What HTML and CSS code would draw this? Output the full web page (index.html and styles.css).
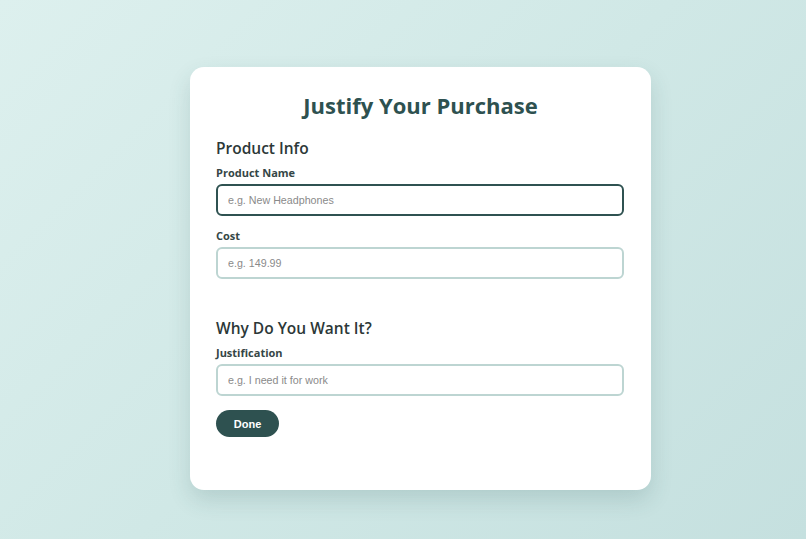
FILE: index.html
```html
<!DOCTYPE html>
<html lang="en">
<head>
<meta charset="utf-8">
<title>Justify Your Purchase</title>
<link rel="stylesheet" href="styles.css">
</head>
<body>
<main class="page">
  <form class="card">
    <h1 class="title">Justify Your Purchase</h1>
    <section class="section">
      <h2 class="section-title">Product Info</h2>
      <div class="field">
        <label class="label" for="name">Product Name</label>
        <input class="input input-focus" id="name" type="text" placeholder="e.g. New Headphones">
      </div>
      <div class="field">
        <label class="label" for="cost">Cost</label>
        <input class="input" id="cost" type="text" placeholder="e.g. 149.99">
      </div>
    </section>
    <section class="section section-second">
      <h2 class="section-title">Why Do You Want It?</h2>
      <div class="field">
        <label class="label" for="why">Justification</label>
        <input class="input" id="why" type="text" placeholder="e.g. I need it for work">
      </div>
    </section>
    <div class="actions">
      <button class="btn" type="button">Done</button>
    </div>
  </form>
</main>
</body>
</html>
```

FILE: styles.css
```css
* { box-sizing: border-box; }
html, body { margin: 0; padding: 0; height: 100%; }
body {
  background: linear-gradient(135deg, #ddf0ee 0%, #d0e8e6 50%, #c5e0df 100%);
  font-family: "Open Sans", "DejaVu Sans", "Liberation Sans", sans-serif;
  color: #2f3b3b;
}
.page {
  height: 100%;
  display: flex;
  justify-content: center;
  align-items: flex-start;
  padding-top: 67px;
  padding-left: 35px;
}
.card {
  width: 461px;
  height: 423px;
  background: #ffffff;
  border-radius: 14px;
  box-shadow: 0 10px 22px rgba(40, 80, 80, 0.16);
  padding: 23px 26px 0 26px;
  display: flex;
  flex-direction: column;
}
.title {
  margin: 0;
  text-align: center;
  font-size: 22px;
  line-height: 30px;
  font-weight: 700;
  color: #2e5150;
}
.section-title {
  margin: 18px 0 0;
  font-size: 15.5px;
  line-height: 20px;
  font-weight: 600;
  color: #2c3838;
}
.section-second { margin-top: 39px; }
.section-second .section-title { margin-top: 0; }
.field {
  display: flex;
  flex-direction: column;
  margin-top: 8px;
}
.field + .field { margin-top: 13px; }
.label {
  font-size: 11px;
  line-height: 13px;
  font-weight: 700;
  color: #354646;
  margin-bottom: 5px;
}
.input {
  width: 408px;
  height: 32px;
  border: 2px solid #bdd5d2;
  border-radius: 6px;
  padding: 0 10px;
  font-family: "Liberation Sans", Arial, sans-serif;
  font-size: 10.7px;
  color: #333;
  background: #fff;
  outline: none;
}
.input::placeholder { color: #8a8a8a; }
.input-focus { border-color: #2f5251; }
.actions { margin-top: 14px; }
.btn {
  width: 63px;
  height: 27px;
  border: none;
  border-radius: 14px;
  background: #2e5150;
  color: #fff;
  font-family: "Liberation Sans", Arial, sans-serif;
  font-weight: 700;
  font-size: 11px;
  padding: 0;
}
```
